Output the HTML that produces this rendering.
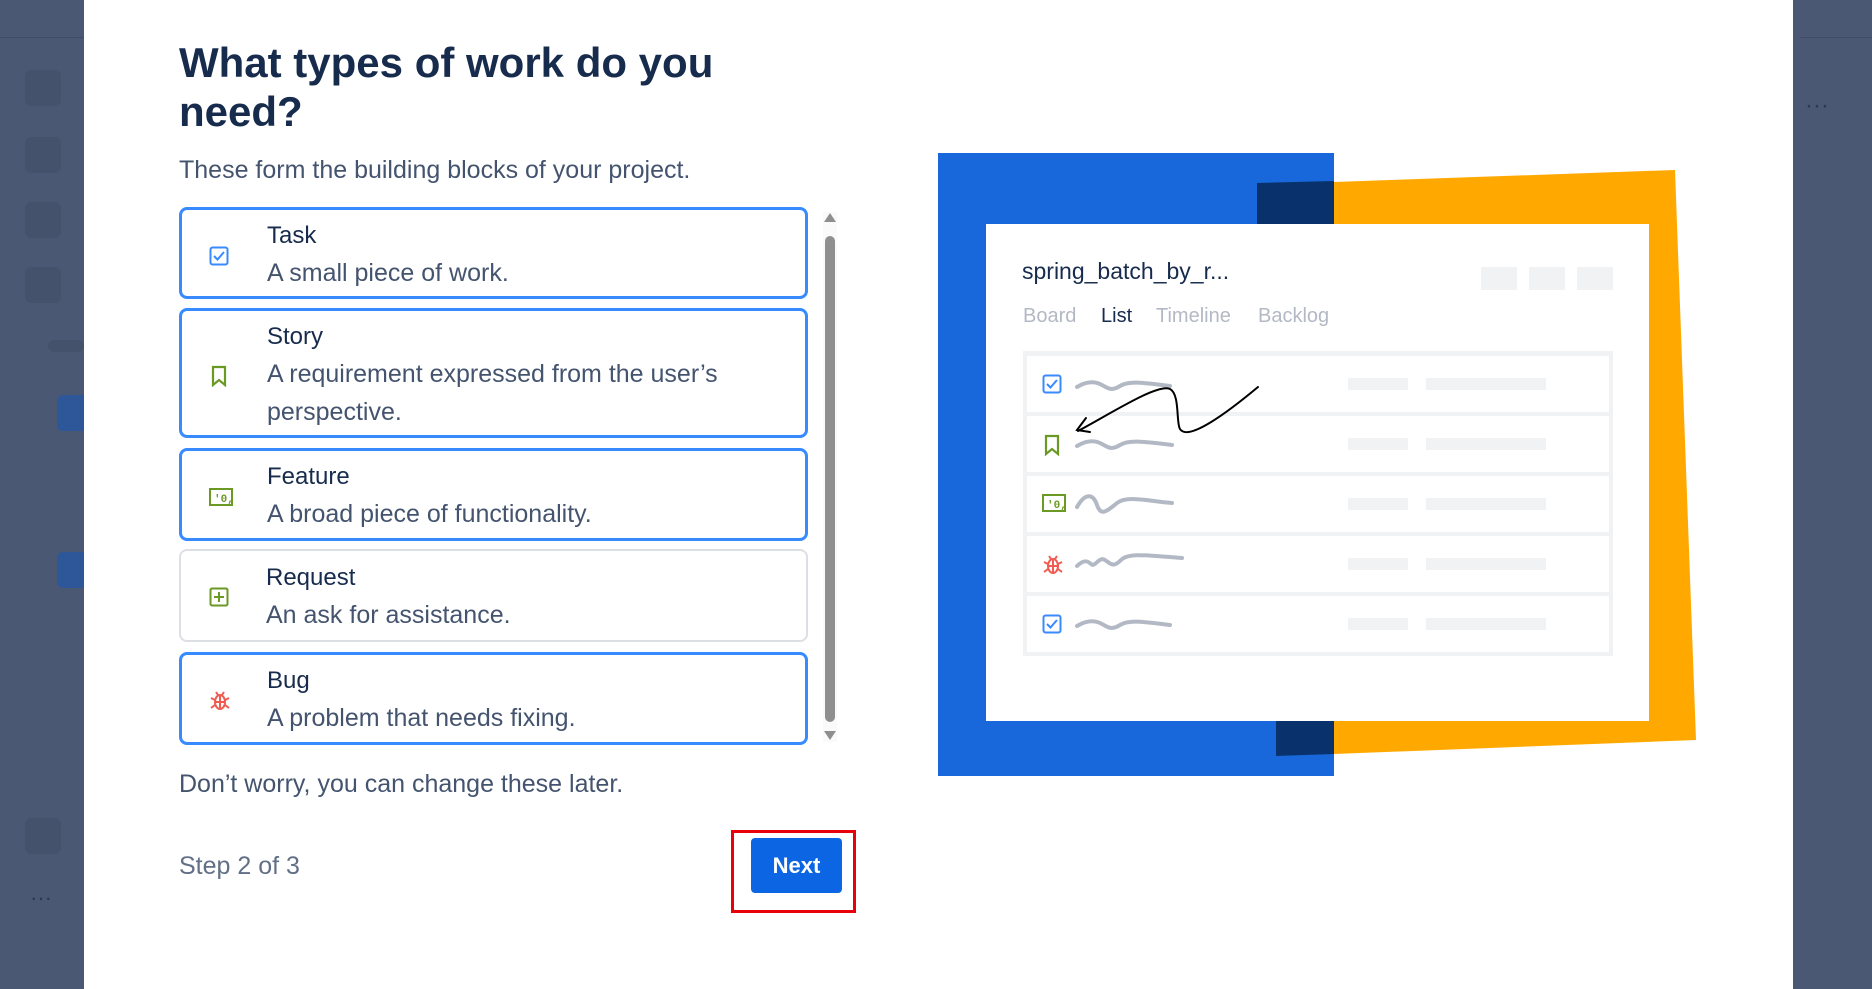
<!DOCTYPE html>
<html><head><meta charset="utf-8"><style>
*{margin:0;padding:0;box-sizing:border-box}
body{width:1872px;height:989px;overflow:hidden;background:#4a5873;font-family:"Liberation Sans",sans-serif;position:relative}
.ab{position:absolute}
.modal{position:absolute;left:84px;top:0;width:1709px;height:989px;background:#fff}
h1{position:absolute;left:179px;top:38px;font-size:42px;line-height:49px;color:#172b4d;font-weight:700;width:600px}
.sub{left:179px;top:156px;font-size:25px;color:#44546f}
.card{position:absolute;left:179px;width:629px;border:3px solid #388bff;border-radius:8px;background:#fff}
.card.g{border:2px solid #dcdfe4}
.card .t{position:absolute;left:85px;font-size:24px;color:#172b4d}
.card .d{position:absolute;left:85px;font-size:25px;color:#44546f;line-height:38px}
.card svg{position:absolute;left:27px}
.side{position:absolute;background:#44526b;border-radius:6px}
.row{position:absolute;left:1027px;width:582px;height:56px;background:#fff}
.row svg{position:absolute;left:15px;top:18px}
.bar{position:absolute;top:22px;height:12px;background:#f1f2f4}
</style></head><body>
<div class="side" style="left:25px;top:70px;width:36px;height:36px"></div>
<div class="side" style="left:25px;top:137px;width:36px;height:36px"></div>
<div class="side" style="left:25px;top:202px;width:36px;height:36px"></div>
<div class="side" style="left:25px;top:267px;width:36px;height:36px"></div>
<div class="side" style="left:48px;top:340px;width:36px;height:12px"></div>
<div class="side" style="left:57px;top:395px;width:30px;height:36px;background:#2e5799"></div>
<div class="side" style="left:57px;top:552px;width:30px;height:36px;background:#2e5799"></div>
<div class="side" style="left:25px;top:818px;width:36px;height:36px"></div>
<div class="ab" style="left:1800px;top:0;width:72px;height:38px;border-bottom:1px solid #3f4c63"></div>
<div class="ab" style="left:0;top:0;width:84px;height:38px;border-bottom:1px solid #3f4c63"></div>
<div class="ab" style="left:1805px;top:92px;color:#2b3a52;font-size:24px">···</div>
<div class="ab" style="left:30px;top:885px;color:#2b3a52;font-size:22px">···</div>
<div class="modal"></div>
<h1>What types of work do you need?</h1>
<div class="ab sub">These form the building blocks of your project.</div>

<div class="card" style="top:207px;height:92px">
<svg style="top:36px" width="20" height="20" viewBox="0 0 20 20"><rect x="1.5" y="1.5" width="17" height="17" rx="2" fill="none" stroke="#388bff" stroke-width="2"/><path d="M5 10l3.5 3.5L15 6" fill="none" stroke="#388bff" stroke-width="2"/></svg>
<div class="t" style="top:12px">Task</div><div class="d" style="top:44px">A small piece of work.</div></div>

<div class="card" style="top:308px;height:130px">
<svg style="top:54px" width="20" height="22" viewBox="0 0 20 22"><path d="M4 2h12v18l-6-5-6 5z" fill="none" stroke="#6a9a23" stroke-width="2.2"/></svg>
<div class="t" style="top:12px">Story</div><div class="d" style="top:44px">A requirement expressed from the user’s<br>perspective.</div></div>

<div class="card" style="top:448px;height:93px">
<svg style="top:37px" width="24" height="18" viewBox="0 0 24 18"><rect x="1" y="1" width="22" height="16" fill="none" stroke="#6a9a23" stroke-width="2"/><text x="5" y="14" font-size="11" font-weight="700" fill="#6a9a23" font-family="Liberation Mono">'0,</text></svg>
<div class="t" style="top:12px">Feature</div><div class="d" style="top:44px">A broad piece of functionality.</div></div>

<div class="card g" style="top:549px;height:93px">
<svg style="top:36px;left:28px" width="20" height="20" viewBox="0 0 20 20"><rect x="1.5" y="1.5" width="17" height="17" rx="1.5" fill="none" stroke="#6a9a23" stroke-width="2"/><path d="M10 5v10M5 10h10" stroke="#6a9a23" stroke-width="2"/></svg>
<div class="t" style="top:13px">Request</div><div class="d" style="top:45px">An ask for assistance.</div></div>

<div class="card" style="top:652px;height:93px">
<svg style="top:35px" width="22" height="22" viewBox="0 0 22 22" fill="none" stroke="#f15b50" stroke-width="2"><ellipse cx="11" cy="12" rx="5" ry="7"/><path d="M6 12h10M11 5v14M2 8l4 2M20 8l-4 2M2 18l4-3M20 18l-4-3M7 2l2 3M15 2l-2 3"/></svg>
<div class="t" style="top:12px">Bug</div><div class="d" style="top:44px">A problem that needs fixing.</div></div>

<div class="ab" style="left:823px;top:212px;width:14px;height:530px;background:#fafafa"></div>
<div class="ab" style="left:824px;top:213px;width:0;height:0;border-left:6px solid transparent;border-right:6px solid transparent;border-bottom:9px solid #8f8f8f"></div>
<div class="ab" style="left:825px;top:236px;width:10px;height:486px;background:#8f8f8f;border-radius:5px"></div>
<div class="ab" style="left:824px;top:731px;width:0;height:0;border-left:6px solid transparent;border-right:6px solid transparent;border-top:9px solid #8f8f8f"></div>

<div class="ab" style="left:179px;top:770px;font-size:25px;color:#44546f">Don’t worry, you can change these later.</div>
<div class="ab" style="left:179px;top:852px;font-size:25px;color:#626f86">Step 2 of 3</div>
<div class="ab" style="left:731px;top:830px;width:125px;height:83px;border:3px solid #e8000b"></div>
<div class="ab" style="left:751px;top:838px;width:91px;height:55px;background:#0c66e4;border-radius:4px;color:#fff;font-weight:700;font-size:22px;text-align:center;line-height:55px">Next</div>

<div class="ab" style="left:938px;top:153px;width:396px;height:623px;background:#1868db"></div>
<svg class="ab" style="left:0;top:0" width="1872" height="989"><polygon points="1334,182 1675,170 1696,740 1334,754" fill="#ffa800"/><polygon points="1257,183 1334,181 1334,754 1276,756 1276,721 1257,224" fill="#09326c"/></svg>
<div class="ab" style="left:986px;top:224px;width:663px;height:497px;background:#fff"></div>
<div class="ab" style="left:1022px;top:258px;font-size:23px;color:#172b4d">spring_batch_by_r...</div>
<div class="ab" style="left:1481px;top:267px;width:36px;height:23px;background:#f1f2f4"></div>
<div class="ab" style="left:1529px;top:267px;width:36px;height:23px;background:#f1f2f4"></div>
<div class="ab" style="left:1577px;top:267px;width:36px;height:23px;background:#f1f2f4"></div>
<div class="ab" style="left:1023px;top:305px;font-size:20px;color:#b3b9c4">Board</div>
<div class="ab" style="left:1101px;top:305px;font-size:20px;color:#172b4d">List</div>
<div class="ab" style="left:1156px;top:305px;font-size:20px;color:#b3b9c4">Timeline</div>
<div class="ab" style="left:1258px;top:305px;font-size:20px;color:#b3b9c4">Backlog</div>
<div class="ab" style="left:1023px;top:351px;width:590px;height:305px;background:#f1f2f4"></div>

<div class="row" style="top:356px"><svg width="20" height="20" viewBox="0 0 20 20"><rect x="1.5" y="1.5" width="17" height="17" rx="2" fill="none" stroke="#388bff" stroke-width="2"/><path d="M5 10l3.5 3.5L15 6" fill="none" stroke="#388bff" stroke-width="2"/></svg><div class="bar" style="left:321px;width:60px"></div><div class="bar" style="left:399px;width:120px"></div></div>
<div class="row" style="top:416px"><svg width="20" height="22" viewBox="0 0 20 22"><path d="M4 2h12v18l-6-5-6 5z" fill="none" stroke="#6a9a23" stroke-width="2.2"/></svg><div class="bar" style="left:321px;width:60px"></div><div class="bar" style="left:399px;width:120px"></div></div>
<div class="row" style="top:476px"><svg width="24" height="18" viewBox="0 0 24 18"><rect x="1" y="1" width="22" height="16" fill="none" stroke="#6a9a23" stroke-width="2"/><text x="5" y="14" font-size="11" font-weight="700" fill="#6a9a23" font-family="Liberation Mono">'0,</text></svg><div class="bar" style="left:321px;width:60px"></div><div class="bar" style="left:399px;width:120px"></div></div>
<div class="row" style="top:536px"><svg width="22" height="22" viewBox="0 0 22 22" fill="none" stroke="#f15b50" stroke-width="2"><ellipse cx="11" cy="12" rx="5" ry="7"/><path d="M6 12h10M11 5v14M2 8l4 2M20 8l-4 2M2 18l4-3M20 18l-4-3M7 2l2 3M15 2l-2 3"/></svg><div class="bar" style="left:321px;width:60px"></div><div class="bar" style="left:399px;width:120px"></div></div>
<div class="row" style="top:596px"><svg width="20" height="20" viewBox="0 0 20 20"><rect x="1.5" y="1.5" width="17" height="17" rx="2" fill="none" stroke="#388bff" stroke-width="2"/><path d="M5 10l3.5 3.5L15 6" fill="none" stroke="#388bff" stroke-width="2"/></svg><div class="bar" style="left:321px;width:60px"></div><div class="bar" style="left:399px;width:120px"></div></div>

<svg class="ab" style="left:0;top:0" width="1872" height="989" fill="none" stroke-linecap="round">
<g stroke="#b3b9c4" stroke-width="4">
<path d="M1077 387c10-6 18-6 25-2s10 6 18 1 20-4 50 0"/>
<path d="M1077 446c10-6 18-6 25-2s10 6 18 1 20-4 52 0"/>
<path d="M1077 507c8-14 16-14 20-2s10 6 20-2 30-2 55 0"/>
<path d="M1077 566c6-6 10-6 14-2s8-8 14-4 8 8 16 0 30-4 61-2"/>
<path d="M1077 626c10-6 18-6 25-2s10 6 18 1 20-4 50 0"/>
</g>
<path d="M1258 387c-30 25-70 55-78 42-4-6 0-35-10-40-12-6-60 25-92 42" stroke="#000" stroke-width="2"/>
<path d="M1086 418l-9 12 13 2" stroke="#000" stroke-width="2"/>
</svg>
</body></html>
